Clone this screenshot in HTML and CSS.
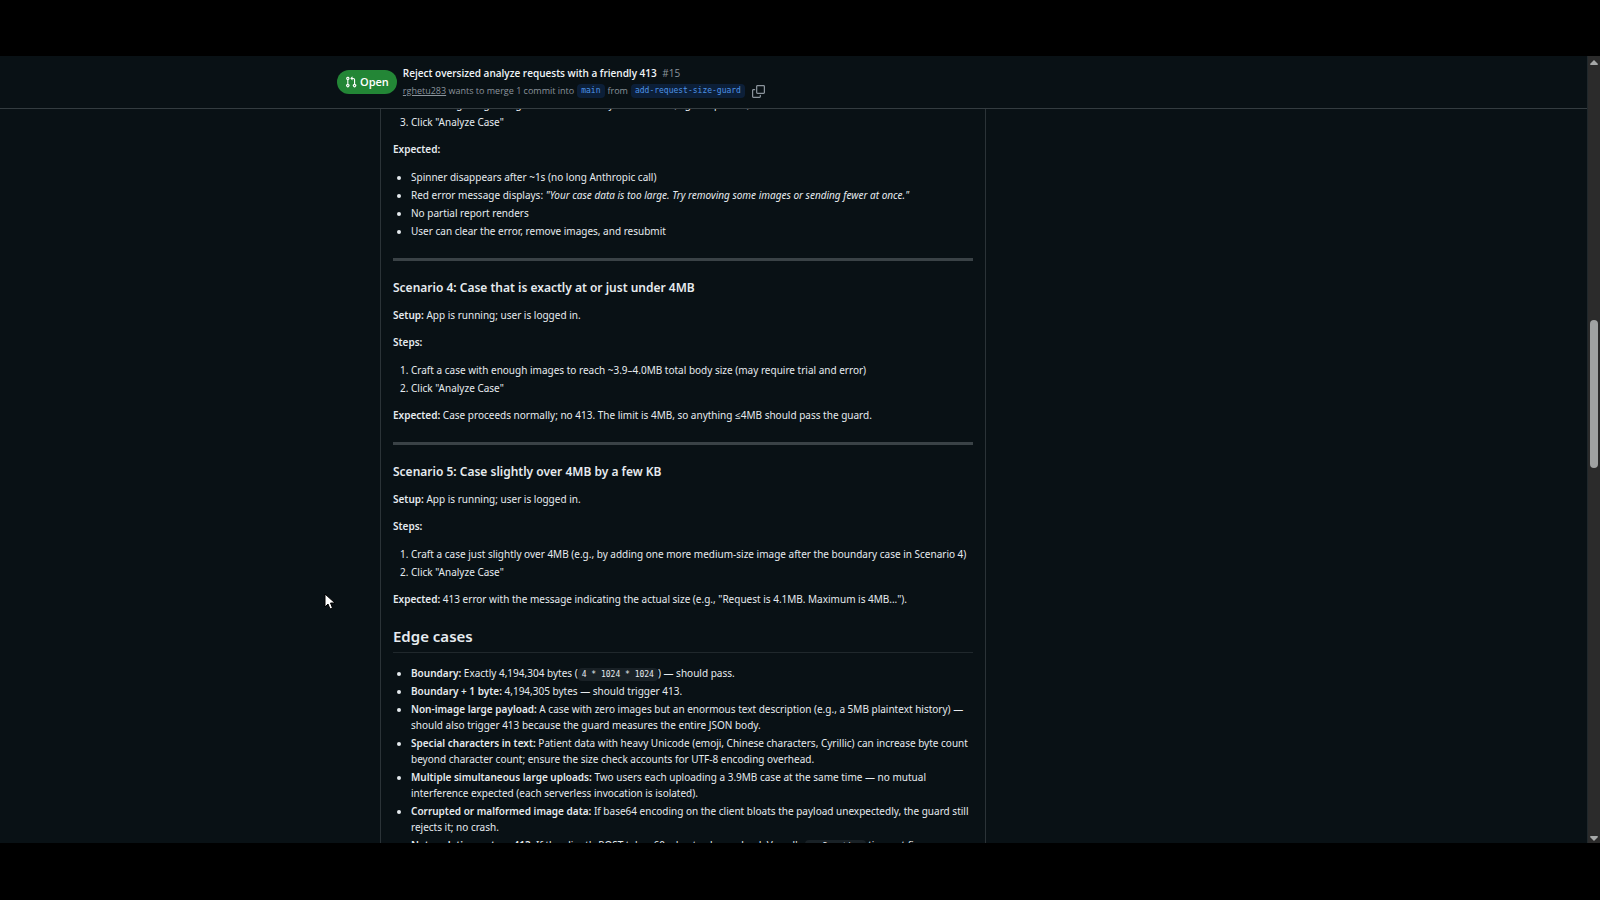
FILE: index.html
```html
<!DOCTYPE html>
<html lang="en">
<head>
    <meta charset="utf-8">
    <title>Reject oversized analyze requests with a friendly 413 #15</title>
    <link rel="stylesheet" href="styles.css">
</head>
<body>
    <div class="window">
        <div class="page">
            <header class="pr-header">
                <div class="container header-row">
                    <span class="state">
                        <svg width="12" height="12" viewBox="0 0 16 16" fill="currentColor" aria-hidden="true"><path d="M1.5 3.25a2.25 2.25 0 1 1 3 2.122v5.256a2.251 2.251 0 1 1-1.5 0V5.372A2.25 2.25 0 0 1 1.5 3.25Zm5.677-.177L9.573.677A.25.25 0 0 1 10 .854V2.5h1A2.5 2.5 0 0 1 13.5 5v5.628a2.251 2.251 0 1 1-1.5 0V5a1 1 0 0 0-1-1h-1v1.646a.25.25 0 0 1-.427.177L7.177 3.427a.25.25 0 0 1 0-.354ZM3.75 2.5a.75.75 0 1 0 0 1.5.75.75 0 0 0 0-1.5Zm0 9.5a.75.75 0 1 0 0 1.5.75.75 0 0 0 0-1.5Zm8.25.75a.75.75 0 1 0 1.5 0 .75.75 0 0 0-1.5 0Z"/></svg>
                        Open
                    </span>
                    <div class="header-text">
                        <h1 class="title">Reject oversized analyze requests with a friendly 413 <span class="number">#15</span></h1>
                        <div class="meta">
                            <span><a class="author" href="#">rghetu283</a> wants to merge 1 commit into</span>
                            <a class="branch" href="#">main</a>
                            <span>from</span>
                            <a class="branch" href="#">add-request-size-guard</a>
                            <button class="copy" type="button" aria-label="Copy head branch name">
                                <svg width="13" height="13" viewBox="0 0 16 16" fill="currentColor" aria-hidden="true"><path d="M0 6.75C0 5.784.784 5 1.75 5h1.5a.75.75 0 0 1 0 1.5h-1.5a.25.25 0 0 0-.25.25v7.5c0 .138.112.25.25.25h7.5a.25.25 0 0 0 .25-.25v-1.5a.75.75 0 0 1 1.5 0v1.5A1.75 1.75 0 0 1 9.25 16h-7.5A1.75 1.75 0 0 1 0 14.25Z"/><path d="M5 1.75C5 .784 5.784 0 6.75 0h7.5C15.216 0 16 .784 16 1.75v7.5A1.75 1.75 0 0 1 14.25 11h-7.5A1.75 1.75 0 0 1 5 9.25Zm1.75-.25a.25.25 0 0 0-.25.25v7.5c0 .138.112.25.25.25h7.5a.25.25 0 0 0 .25-.25v-7.5a.25.25 0 0 0-.25-.25Z"/></svg>
                            </button>
                        </div>
                    </div>
                </div>
            </header>

            <main class="container content">
                <article class="comment">
                    <ol start="2">
                        <li>Add enough large images so the total body is over 4MB (e.g., six photos)</li>
                        <li>Click "Analyze Case"</li>
                    </ol>
                    <p><strong>Expected:</strong></p>
                    <ul>
                        <li>Spinner disappears after ~1s (no long Anthropic call)</li>
                        <li>Red error message displays: <em>"Your case data is too large. Try removing some images or sending fewer at once."</em></li>
                        <li>No partial report renders</li>
                        <li>User can clear the error, remove images, and resubmit</li>
                    </ul>
                    <hr>

                    <h3>Scenario 4: Case that is exactly at or just under 4MB</h3>
                    <p><strong>Setup:</strong> App is running; user is logged in.</p>
                    <p><strong>Steps:</strong></p>
                    <ol>
                        <li>Craft a case with enough images to reach ~3.9–4.0MB total body size (may require trial and error)</li>
                        <li>Click "Analyze Case"</li>
                    </ol>
                    <p><strong>Expected:</strong> Case proceeds normally; no 413. The limit is 4MB, so anything ≤4MB should pass the guard.</p>
                    <hr>

                    <h3>Scenario 5: Case slightly over 4MB by a few KB</h3>
                    <p><strong>Setup:</strong> App is running; user is logged in.</p>
                    <p><strong>Steps:</strong></p>
                    <ol>
                        <li>Craft a case just slightly over 4MB (e.g., by adding one more medium-size image after the boundary case in Scenario 4)</li>
                        <li>Click "Analyze Case"</li>
                    </ol>
                    <p><strong>Expected:</strong> 413 error with the message indicating the actual size (e.g., "Request is 4.1MB. Maximum is 4MB...").</p>

                    <h2>Edge cases</h2>
                    <ul>
                        <li><strong>Boundary:</strong> Exactly 4,194,304 bytes (<code>4 * 1024 * 1024</code>) — should pass.</li>
                        <li><strong>Boundary + 1 byte:</strong> 4,194,305 bytes — should trigger 413.</li>
                        <li><strong>Non-image large payload:</strong> A case with zero images but an enormous text description (e.g., a 5MB plaintext history) — should also trigger 413 because the guard measures the entire JSON body.</li>
                        <li><strong>Special characters in text:</strong> Patient data with heavy Unicode (emoji, Chinese characters, Cyrillic) can increase byte count beyond character count; ensure the size check accounts for UTF-8 encoding overhead.</li>
                        <li><strong>Multiple simultaneous large uploads:</strong> Two users each uploading a 3.9MB case at the same time — no mutual interference expected (each serverless invocation is isolated).</li>
                        <li><strong>Corrupted or malformed image data:</strong> If base64 encoding on the client bloats the payload unexpectedly, the guard still rejects it; no crash.</li>
                        <li><strong>Network timeout vs. 413:</strong> If the client's POST takes 60s due to slow upload, Vercel's <code>maxDuration</code> timeout fires.</li>
                    </ul>
                </article>
            </main>
        </div>

        <div class="scrollbar" aria-hidden="true">
            <svg width="8" height="5" viewBox="0 0 8 5"><path d="M4 0 8 4Q8 5 7 5H1Q0 5 0 4Z" fill="#a6a8a8"/></svg>
            <div class="track"><div class="thumb"></div></div>
            <svg width="8" height="5" viewBox="0 0 8 5"><path d="M4 5 8 1Q8 0 7 0H1Q0 0 0 1Z" fill="#a6a8a8"/></svg>
        </div>

        <svg class="cursor" width="12" height="18" viewBox="0 0 12 18" aria-hidden="true"><path d="M1 1v13l3-3 2 5 2.500-1-2-5H11Z" fill="#fff" stroke="#000" stroke-width="1"/></svg>
    </div>
</body>
</html>
```
FILE: styles.css
```css
* {
    box-sizing: border-box;
}
body {
    margin: 0;
    padding: 56px 0 57px;
    height: 100vh;
    background: #000;
    color: #e6ebef;
    font-family: "Noto Sans", "Open Sans", sans-serif;
    font-size: 10px;
    line-height: 16px;
}
.window {
    position: relative;
    display: flex;
    height: 100%;
    overflow: hidden;
    background: #091115;
}
.page {
    flex: 1;
    min-width: 0;
}
.container {
    max-width: 913px;
    margin: 0 auto;
}

/* sticky header */
.pr-header {
    position: relative;
    z-index: 1;
    padding: 8px 0;
    background: #091115;
    border-bottom: 1px solid #343c40;
    font-family: "Open Sans", "Noto Sans", sans-serif;
}
.header-row {
    display: flex;
    align-items: center;
    gap: 6px;
}
.state {
    display: flex;
    align-items: center;
    gap: 3px;
    height: 24px;
    padding: 0 8px;
    border-radius: 12px;
    background: #238636;
    color: #fff;
    font-size: 11px;
    font-weight: 600;
}
.title {
    margin: 0;
    font-size: 10px;
    line-height: 18px;
    font-weight: 600;
    color: #f0f4f8;
}
.number {
    margin-left: 3px;
    font-weight: 400;
    color: #8b949c;
}
.meta {
    display: flex;
    align-items: center;
    gap: 3px;
    font-size: 9px;
    line-height: 18px;
    color: #8b949c;
}
.author {
    color: inherit;
}
.branch {
    padding: 0 4px;
    border-radius: 4px;
    background: #0c1f38;
    color: #4c94e8;
    font: 8px/14px "DejaVu Sans Mono", monospace;
    text-decoration: none;
}
.copy {
    display: flex;
    padding: 0 4px;
    border: 0;
    background: none;
    color: #8b949c;
}

/* comment body */
.content {
    margin-top: -13px;
    padding-left: 43px;
}
.comment {
    max-width: 606px;
    padding: 0 12px 12px;
    border: 1px solid #2b3337;
    border-width: 0 1px;
}
.comment p,
.comment ul,
.comment ol {
    margin: 0 0 11px;
}
.comment ul,
.comment ol {
    padding-left: 18px;
}
.comment p + ul,
.comment p + ol {
    margin-top: 12px;
}
.comment li + li {
    margin-top: 2px;
}
.comment strong {
    font-weight: 600;
}
.comment hr {
    height: 3px;
    margin: 19px 0;
    border: 0;
    background: #3a4246;
}
.comment h2,
.comment h3 {
    margin: 19px 0 11px;
    font-weight: 600;
}
.comment h2 {
    margin-bottom: 12px;
    padding-bottom: 6px;
    border-bottom: 1px solid #20282c;
    font-size: 15px;
    line-height: 20px;
}
.comment h3 {
    font-size: 12px;
    line-height: 16px;
}
.comment code {
    padding: 2px 4px;
    border-radius: 4px;
    background: #192126;
    font: 8px/12px "DejaVu Sans Mono", monospace;
}

/* scrollbar */
.scrollbar {
    display: flex;
    flex-direction: column;
    align-items: center;
    width: 13px;
    padding: 4px 0 2px;
    background: #2b2b2b;
    border-left: 1px solid #20282c;
}
.track {
    flex: 1;
    padding-top: 255px;
}
.thumb {
    width: 8px;
    height: 148px;
    border-radius: 4px;
    background: #a0a2a2;
}
.cursor {
    position: absolute;
    left: 324px;
    top: 537px;
}
```
